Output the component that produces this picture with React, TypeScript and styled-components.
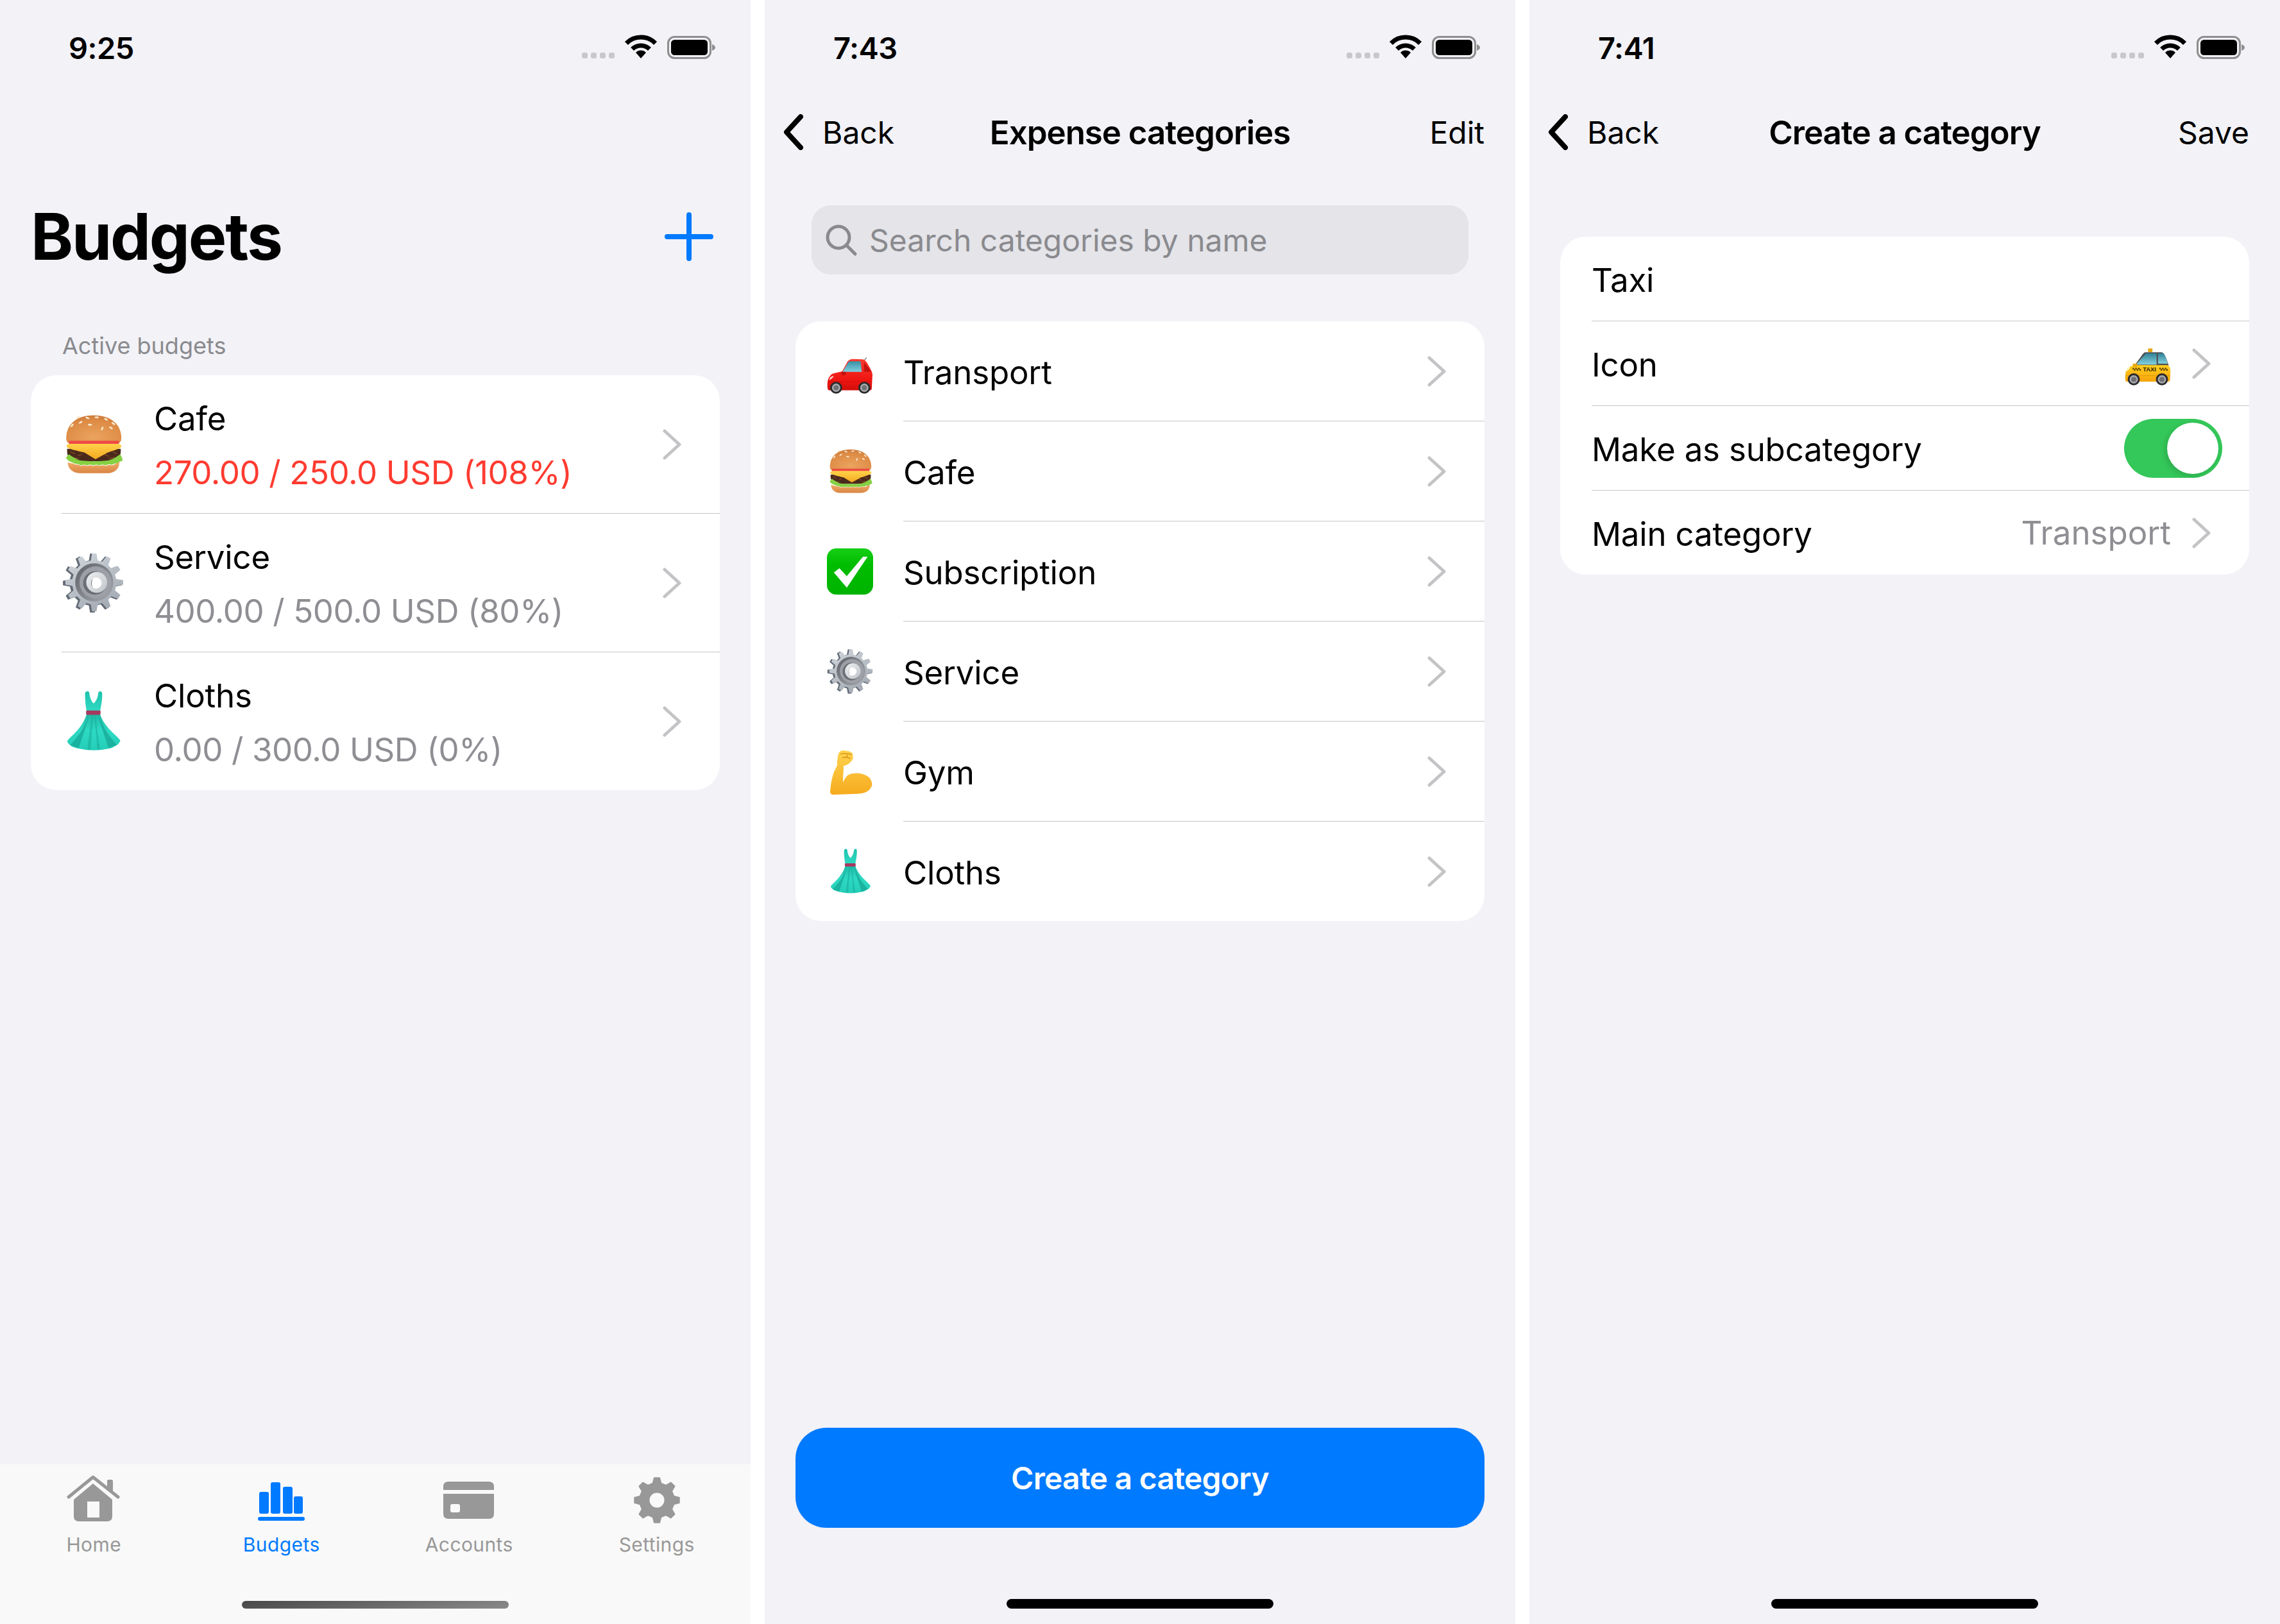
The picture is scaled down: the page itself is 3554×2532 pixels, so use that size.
import React from 'react'
import styled, { createGlobalStyle } from 'styled-components'

const GlobalStyle = createGlobalStyle`
  html, body {
    margin: 0;
    padding: 0;
    background: #ffffff;
  }
  body {
    font-family: Inter, "Noto Sans", "Liberation Sans", sans-serif;
    color: #000000;
  }
`

const Page = styled.div`
  display: flex;
  gap: 22px;
  width: 3554px;
  height: 2532px;
  overflow: hidden;
`

const Screen = styled.div`
  display: flex;
  flex-direction: column;
  flex: none;
  width: 1170px;
  height: 2532px;
  background: #f2f2f7;
`

const StatusRow = styled.div`
  display: flex;
  flex: none;
  align-items: flex-start;
  justify-content: space-between;
  box-sizing: border-box;
  height: 132px;
  padding: 54px 55px 0 107px;
`

const Clock = styled.div`
  font-size: 47px;
  font-weight: 600;
  line-height: 42px;
  letter-spacing: -0.5px;
`

const LargeHeader = styled.div`
  display: flex;
  align-items: center;
  justify-content: space-between;
  height: 120px;
  margin-top: 177px;
  padding: 0 58px 0 48px;
`

const LargeTitle = styled.h1`
  margin: 0;
  font-size: 100px;
  font-weight: 700;
  line-height: 120px;
  letter-spacing: -2.2px;
`

const SectionLabel = styled.div`
  margin: 86px 0 22px 97px;
  font-size: 36px;
  line-height: 48px;
  color: #8a8a8e;
`

const Card = styled.div<{ $top?: number }>`
  margin: ${({ $top }) => $top ?? 0}px 48px 0;
  border-radius: 40px;
  background: #ffffff;
  overflow: hidden;
`

const Separator = styled.div<{ $inset: number }>`
  height: 1px;
  margin-left: ${({ $inset }) => $inset}px;
  background: #c6c6c8;
`

const BudgetRow = styled.div`
  display: flex;
  align-items: center;
  gap: 47px;
  height: 215px;
  padding: 0 42px 0 49px;
`

const BudgetText = styled.div`
  display: flex;
  flex: 1;
  flex-direction: column;
  gap: 20px;
`

const RowLabel = styled.div`
  padding-top: 4px;
  font-size: 51px;
  line-height: 60px;
  letter-spacing: -0.2px;
`

const Amount = styled.div<{ $over?: boolean }>`
  padding-top: 4px;
  font-size: 51px;
  line-height: 60px;
  letter-spacing: -0.4px;
  color: ${({ $over }) => ($over ? '#ff3b30' : '#8e8e93')};
`

const CategoryRow = styled.div`
  display: flex;
  align-items: center;
  gap: 47px;
  height: 155px;
  padding: 0 42px 0 49px;
`

const FormRow = styled.div`
  display: flex;
  align-items: center;
  justify-content: space-between;
  height: 131px;
  padding: 0 42px 0 49px;
`

const Grow = styled(RowLabel)`
  flex: 1;
`

const Value = styled.div`
  display: flex;
  align-items: center;
  gap: 32px;
  font-size: 51px;
  color: #8e8e93;
`

const ChevronIcon = styled.svg`
  flex: none;
  width: 30px;
  height: 48px;
  margin-right: 18px;
  fill: none;
  stroke: #c4c4c7;
  stroke-width: 5;
  stroke-linecap: round;
  stroke-linejoin: round;
`

const EmojiIcon = styled.svg<{ $size: number }>`
  flex: none;
  width: ${({ $size }) => $size}px;
  height: ${({ $size }) => $size}px;
  overflow: visible;
`

const NavBar = styled.div`
  display: grid;
  flex: none;
  grid-template-columns: 1fr auto 1fr;
  align-items: center;
  height: 148px;
  padding: 0 48px;
`

const BackLink = styled.div`
  display: flex;
  align-items: center;
  gap: 29px;
  margin-left: -19px;
  font-size: 48px;
`

const BackChevron = styled.svg`
  width: 32px;
  height: 56px;
  fill: none;
  stroke: #000000;
  stroke-width: 8;
  stroke-linecap: round;
  stroke-linejoin: round;
`

const NavTitle = styled.div`
  font-size: 51px;
  font-weight: 600;
  letter-spacing: -1px;
`

const NavAction = styled.div`
  font-size: 48px;
  text-align: right;
`

const SearchField = styled.div`
  display: flex;
  align-items: center;
  gap: 18px;
  height: 108px;
  margin: 40px 73px 73px;
  padding: 0 20px;
  border-radius: 30px;
  background: #e4e4e9;
  font-size: 48px;
  color: #8a8a8e;
`

const SearchGlyph = styled.svg`
  flex: none;
  width: 52px;
  height: 52px;
  fill: none;
  stroke: #8a8a8e;
  stroke-width: 5;
  stroke-linecap: round;
`

const Footer = styled.div`
  display: flex;
  flex-direction: column;
  margin-top: auto;
`

const PrimaryButton = styled.div`
  display: flex;
  align-items: center;
  justify-content: center;
  height: 156px;
  margin: 0 48px 111px;
  border-radius: 48px;
  background: #007aff;
  color: #ffffff;
  font-size: 48px;
  font-weight: 600;
  letter-spacing: -0.75px;
`

const HomeBar = styled.div<{ $soft?: boolean }>`
  align-self: center;
  width: 416px;
  height: 15px;
  margin-bottom: 24px;
  border-radius: 8px;
  background: ${({ $soft }) => ($soft ? 'linear-gradient(170deg, #484848, #8a8a8a)' : '#000000')};
`

const TabBar = styled.div`
  display: flex;
  flex-direction: column;
  margin-top: auto;
  height: 249px;
  box-sizing: border-box;
  padding-top: 17px;
  background: #f9f9f9;
`

const Tabs = styled.div`
  display: grid;
  grid-template-columns: repeat(4, 1fr);
  margin-bottom: 68px;
`

const Tab = styled.div<{ $active?: boolean }>`
  display: flex;
  flex-direction: column;
  align-items: center;
  gap: 12px;
  font-size: 30px;
  line-height: 40px;
  letter-spacing: 0.4px;
  color: ${({ $active }) => ($active ? '#007aff' : '#989898')};
`

const TabGlyph = styled.svg`
  width: 84px;
  height: 76px;
  fill: currentColor;
`

const Toggle = styled.div`
  display: flex;
  justify-content: flex-end;
  box-sizing: border-box;
  width: 153px;
  height: 92px;
  padding: 6px;
  border-radius: 46px;
  background: #34c759;
`

const ToggleKnob = styled.div`
  width: 80px;
  height: 80px;
  border-radius: 50%;
  background: #ffffff;
  box-shadow: -3px 3px 8px rgba(0, 0, 0, 0.14);
`

function gearPath(cx: number, cy: number, outer: number, inner: number, teeth: number) {
  const step = (Math.PI * 2) / teeth
  const pts: string[] = []
  for (let i = 0; i < teeth; i++) {
    const a = i * step - Math.PI / 2
    const at = (r: number, d: number) =>
      `${(cx + r * Math.cos(a + d)).toFixed(2)} ${(cy + r * Math.sin(a + d)).toFixed(2)}`
    pts.push(at(inner, -step * 0.3), at(outer, -step * 0.15), at(outer, step * 0.15), at(inner, step * 0.3))
  }
  return `M${pts.join('L')}Z`
}

const Chevron = () => (
  <ChevronIcon viewBox="0 0 30 48">
    <path d="M4 3 L27 24 L4 45" />
  </ChevronIcon>
)

const Back = () => (
  <BackLink>
    <BackChevron viewBox="0 0 32 56">
      <path d="M27 4 L5 28 L27 52" />
    </BackChevron>
    Back
  </BackLink>
)

const StatusIcons = () => (
  <svg width="208" height="40" viewBox="0 0 208 40">
    {[0, 14, 28, 42].map((x) => (
      <rect key={x} x={x} y="28" width="9" height="9" rx="3" fill="#c7c7cc" />
    ))}
    <g transform="translate(68 1)" fill="none" stroke="#000000" strokeWidth="7">
      <path d="M1.4 12.4 A32 32 0 0 1 46.6 12.4" />
      <path d="M10.6 21.6 A19 19 0 0 1 37.4 21.6" />
      <path d="M24 36 L16 27 A11 11 0 0 1 32 27 Z" fill="#000000" stroke="none" />
    </g>
    <rect x="134.5" y="3.5" width="66" height="33" rx="10" fill="none" stroke="#8e8e8e" strokeWidth="3" />
    <rect x="139" y="8" width="57" height="24" rx="5.5" fill="#000000" />
    <path d="M203 15 C206 16 208 18 208 20 C208 22 206 24 203 25 Z" fill="#8e8e8e" />
  </svg>
)

const StatusBar = ({ time }: { time: string }) => (
  <StatusRow>
    <Clock>{time}</Clock>
    <StatusIcons />
  </StatusRow>
)

const Burger = () => (
  <>
    <defs>
      <radialGradient id="bunTop" cx="0.5" cy="0.75" r="0.8">
        <stop offset="0" stopColor="#eba45e" />
        <stop offset="0.7" stopColor="#dd8b45" />
        <stop offset="1" stopColor="#c9773a" />
      </radialGradient>
      <linearGradient id="bunBottom" x1="0" y1="0" x2="0" y2="1">
        <stop offset="0" stopColor="#f1ad6a" />
        <stop offset="1" stopColor="#d98543" />
      </linearGradient>
      <linearGradient id="cheese" x1="0" y1="0" x2="0" y2="1">
        <stop offset="0" stopColor="#ffd24a" />
        <stop offset="1" stopColor="#f3a81f" />
      </linearGradient>
    </defs>
    <path d="M6.5 40 C6.5 14 27 2.5 51 2.5 C75 2.5 96 14 96 40 C96 46 92 49 86 49 L16 49 C10 49 6.5 46 6.5 40Z" fill="url(#bunTop)" />
    {[[16, 19, -50], [30, 14, -30], [41, 7, 20], [56, 6, 0], [71, 9, 30], [83, 16, 40], [45, 18, 10], [65, 24, -70], [79, 23, 30], [26, 6, -20]].map(([x, y, r]) => (
      <ellipse key={`${x}-${y}`} cx={x} cy={y} rx="3.4" ry="1.5" fill="#f8e6c8" transform={`rotate(${r} ${x} ${y})`} />
    ))}
    <path d="M11 44 H92 C93 50 90 55 84 55 H20 C13 55 10 50 11 44Z" fill="#ee4a44" />
    <path d="M8 57 H95 C96 70 90 77 80 77 H24 C12 77 7 70 8 57Z" fill="#4b2a1b" />
    <path d="M14 62 L20 65 M26 68 L32 66 M68 66 L75 69 M82 62 L88 65 M20 72 L27 73 M76 73 L84 71" stroke="#7c4a2b" strokeWidth="1.6" strokeLinecap="round" />
    <path d="M7 53 C7 51 9 49 12 49 L91 49 C94 49 97 52 96 54 C95 56 84 60 74 63 L54 74 L36 63 C24 60 8 57 7 53Z" fill="url(#cheese)" />
    <path d="M6 72 C7 70 10 67 11 66 C16 70 22 73 26 75 C34 78 70 78 78 75 C84 73 90 69 94 66 C96 69 98 72 98 76 C94 78 92 78 90 81 C86 80 83 82 80 83 C76 81 73 83 70 84 C67 82 63 83 60 84 C56 82 53 83 50 84 C47 82 43 83 40 84 C36 82 33 83 30 84 C26 81 23 82 20 81 C17 79 11 79 6 72Z" fill="#86d044" />
    <path d="M9 79 C13 81 17 80 20 82 C23 83 27 82 30 85 C33 84 37 83 40 85 C44 84 47 83 50 85 C53 84 57 83 60 85 C63 84 67 83 70 85 C73 84 77 82 80 84 C84 83 88 81 93 78 C93 90 84 96.5 74 96.5 H28 C18 96.5 9 90 9 79Z" fill="url(#bunBottom)" />
  </>
)

const Cog = () => (
  <>
    <defs>
      <linearGradient id="cogFace" x1="0.2" y1="0" x2="0.8" y2="1">
        <stop offset="0" stopColor="#cdd3d9" />
        <stop offset="1" stopColor="#a2a8b0" />
      </linearGradient>
      <linearGradient id="cogRing" x1="0" y1="0" x2="1" y2="1">
        <stop offset="0" stopColor="#5e6168" />
        <stop offset="1" stopColor="#a5a8ae" />
      </linearGradient>
      <linearGradient id="cogBoss" x1="0" y1="0" x2="1" y2="1">
        <stop offset="0" stopColor="#eef0f2" />
        <stop offset="1" stopColor="#bfc3c8" />
      </linearGradient>
    </defs>
    <path d={gearPath(49, 50, 48, 37, 12)} fill="#626a75" />
    <path d={gearPath(52, 49, 47, 36, 12)} fill="url(#cogFace)" />
    <circle cx="52" cy="49" r="31" fill="url(#cogRing)" />
    <circle cx="54" cy="49" r="26" fill="#9da0a6" />
    <circle cx="53" cy="50" r="19" fill="#6b6e75" />
    <circle cx="56" cy="49" r="17" fill="url(#cogBoss)" />
    <circle cx="55" cy="50" r="9" fill="#ffffff" />
    <path d="M50 43 A9 9 0 0 0 50 57 A12 12 0 0 1 50 43Z" fill="#6b6e75" />
  </>
)

const Dress = () => (
  <>
    <defs>
      <linearGradient id="dressTop" x1="0" y1="0" x2="0" y2="1">
        <stop offset="0" stopColor="#1fc3ae" />
        <stop offset="1" stopColor="#2fd9c2" />
      </linearGradient>
      <linearGradient id="dressSkirt" x1="0" y1="0" x2="0" y2="1">
        <stop offset="0" stopColor="#1fb8a5" />
        <stop offset="0.45" stopColor="#2edac3" />
        <stop offset="1" stopColor="#24cdb7" />
      </linearGradient>
    </defs>
    <path d="M37 6 C37 2 39 0.7 41 0.7 C44 0.7 44 3 44.5 7 C45.5 13 48 18 51 20.5 C54 18 57 13 58 7 C58.5 3 59 0.7 62 0.7 C64 0.7 65 3 65 6 C65 16 63 25 61.5 33 H39.6 C38 25 37 16 37 6Z" fill="url(#dressTop)" />
    <path d="M39.6 38 H61.5 C65 50 74 60 82 68 C87 73 92 77 94.4 81 C92 86 90 88 85 90 C80 94 74 94 68 95 C60 97 42 97 34 95 C27 94 20 93 15 90 C12 88 9 85 8 82 C11 77 17 73 22 67 C29 60 36 50 39.6 38Z" fill="url(#dressSkirt)" />
    <path d="M13 88 C24 76 36 62 43 40 C38 64 30 80 27 93Z M89 88 C78 76 68 62 59 40 C64 64 72 80 75 93Z" fill="#16a896" opacity="0.75" />
    <path d="M48 40 C46 60 42 80 41 96 L46 96 C47 78 49 60 50 40Z M54 40 C56 60 60 80 61 96 L57 96 C56 78 54 60 52 40Z" fill="#17ab99" opacity="0.55" />
    <rect x="38.8" y="32" width="23.4" height="7" rx="1.5" fill="#a6395f" />
  </>
)

const Car = () => (
  <>
    <defs>
      <linearGradient id="carBody" x1="0" y1="0" x2="0" y2="1">
        <stop offset="0" stopColor="#fb3b30" />
        <stop offset="0.7" stopColor="#ee1410" />
        <stop offset="1" stopColor="#cf0f0c" />
      </linearGradient>
      <linearGradient id="carGlass" x1="0" y1="0" x2="0" y2="1">
        <stop offset="0" stopColor="#3b8fa3" />
        <stop offset="1" stopColor="#7fd0de" />
      </linearGradient>
    </defs>
    <path d="M80 27 L85.6 20.6" stroke="#666666" strokeWidth="1.6" strokeLinecap="round" />
    <path d="M1 80 C1 70 3 65 6 61 C8 57 11 55 15 54 L33 50 L45 28 C48 25 52 23.4 57 23.4 L78 24 C84 26 87 31 90 37 C94 44 98 50 98.6 57 L97 87 C97 90 95 91 92 91 H5 C2 91 1 88 1 80Z" fill="url(#carBody)" />
    <path d="M33.8 51 L47.7 28 H73 L75.5 51Z" fill="url(#carGlass)" />
    <path d="M80 31 C86 36 91 44 95 51 L81 51Z" fill="#c21410" />
    <path d="M31 51 H41 V57 L35 59 L31 56Z" fill="#c4120e" />
    <path d="M6 65 C8 62 11 60 15 60 C13 64 9 67 5 69Z" fill="#ffd9d6" />
    <path d="M3 72 H96" stroke="#c40f0c" strokeWidth="1" />
    {[19.9, 81].map((cx) => (
      <g key={cx}>
        <circle cx={cx} cy="85.4" r="13" fill="#2a2a2c" />
        <circle cx={cx} cy="85.4" r="9" fill="#a9abaf" />
        <circle cx={cx} cy="85.4" r="5.5" fill="#6f7074" />
      </g>
    ))}
  </>
)

const Check = () => (
  <>
    <defs>
      <linearGradient id="checkBox" x1="0" y1="0" x2="0" y2="1">
        <stop offset="0" stopColor="#16cf16" />
        <stop offset="0.35" stopColor="#00bd00" />
        <stop offset="1" stopColor="#00b300" />
      </linearGradient>
    </defs>
    <rect x="0" y="0" width="100" height="100" rx="20" fill="url(#checkBox)" />
    <path d="M15 52 L27 43 L43 60 L78 18 L88 18 L43 85Z" fill="#ffffff" />
  </>
)

const Muscle = () => (
  <>
    <defs>
      <linearGradient id="armSkin" x1="0" y1="0" x2="0" y2="1">
        <stop offset="0" stopColor="#ffd34e" />
        <stop offset="1" stopColor="#f6ab1f" />
      </linearGradient>
    </defs>
    <path d="M24.5 12 C27 7 30 4 34 4 C42 4 50 6 54.6 9.5 C57 14 57 20 56 23.4 C53 28 50 31 47.7 32.6 C44 35 40 37 36 37.5 C36 40 36 43 36 46.5 C35 56 34.5 66 35 74 C37 68 40 62 45 58 C51 54 59 53 66 53.5 C76 54 85 57 91.7 62.7 C96 68 98 74 97.7 79 C96 85 92 90 87 93 C80 97 70 98 61.6 98.4 L14 100 C10 100 7 98 6.9 93 C8 80 10 68 12.9 58 C15 50 19 43 22 37 C22 28 23 20 24.5 12Z" fill="url(#armSkin)" />
    <path d="M30 12 C36 10 44 10 53 13 M34 20 C40 18 46 19 50 22 M44 14 L42 19" fill="none" stroke="#d58a10" strokeWidth="1.8" strokeLinecap="round" />
  </>
)

const Taxi = () => (
  <>
    <defs>
      <linearGradient id="taxiBody" x1="0" y1="0" x2="0" y2="1">
        <stop offset="0" stopColor="#ffcf1f" />
        <stop offset="1" stopColor="#f5a30a" />
      </linearGradient>
      <linearGradient id="taxiGlass" x1="0" y1="0" x2="0" y2="1">
        <stop offset="0" stopColor="#2e7f96" />
        <stop offset="1" stopColor="#84d2e0" />
      </linearGradient>
    </defs>
    <rect x="50.5" y="17" width="9.5" height="8" rx="1.5" fill="#e9a713" />
    <path d="M21 54 L40 28 C42 26 44 25.5 47 25.5 L80 25.5 C86 27 90 38 95 54Z" fill="#4c4c50" />
    <path d="M24 52 L46 27.5 H69 V52Z" fill="url(#taxiGlass)" />
    <path d="M72 27.5 H84 C88 33 91 42 93 50 H72Z" fill="url(#taxiGlass)" />
    <path d="M1 83 C1 72 2 66 5 61 C9 57 14 55 20 53 H93 C97 55 99 60 99 66 L98 85 C98 88 96 89 93 89 H5 C2 89 1 87 1 83Z" fill="url(#taxiBody)" />
    <path d="M17 50 H27 V57 H19Z" fill="#eaa80e" />
    <path d="M4 62 C6 59 9 58 12 57 C11 61 8 65 3 67Z" fill="#fff4c2" />
    <g fill="#3a2a00">
      {[17, 23, 29, 75, 81, 87].map((x) => (
        <g key={x}>
          <rect x={x} y="59" width="3" height="3" />
          <rect x={x + 3} y="62" width="3" height="3" />
        </g>
      ))}
    </g>
    <text x="53.5" y="66" fontFamily="Liberation Sans, sans-serif" fontSize="13" fontWeight="700" textAnchor="middle" fill="#2a2000">
      TAXI
    </text>
    <path d="M2 76 H98" stroke="#d98d06" strokeWidth="1" />
    {[19.5, 80.5].map((cx) => (
      <g key={cx}>
        <circle cx={cx} cy="84" r="13" fill="#2a2a2c" />
        <circle cx={cx} cy="84" r="9" fill="#a9abaf" />
        <circle cx={cx} cy="84" r="5.5" fill="#6f7074" />
      </g>
    ))}
  </>
)

const emojis = {
  burger: Burger,
  cog: Cog,
  dress: Dress,
  car: Car,
  check: Check,
  muscle: Muscle,
  taxi: Taxi,
}

type EmojiName = keyof typeof emojis

const Emoji = ({ name, size }: { name: EmojiName; size: number }) => {
  const Drawing = emojis[name]
  return (
    <EmojiIcon $size={size} viewBox="0 0 100 100">
      <Drawing />
    </EmojiIcon>
  )
}

const budgets: { icon: EmojiName; name: string; amount: string; over?: boolean }[] = [
  { icon: 'burger', name: 'Cafe', amount: '270.00 / 250.0 USD (108%)', over: true },
  { icon: 'cog', name: 'Service', amount: '400.00 / 500.0 USD (80%)' },
  { icon: 'dress', name: 'Cloths', amount: '0.00 / 300.0 USD (0%)' },
]

const categories: { icon: EmojiName; name: string }[] = [
  { icon: 'car', name: 'Transport' },
  { icon: 'burger', name: 'Cafe' },
  { icon: 'check', name: 'Subscription' },
  { icon: 'cog', name: 'Service' },
  { icon: 'muscle', name: 'Gym' },
  { icon: 'dress', name: 'Cloths' },
]

const BudgetsScreen = () => (
  <Screen>
    <StatusBar time="9:25" />
    <LargeHeader>
      <LargeTitle>Budgets</LargeTitle>
      <svg width="76" height="76" viewBox="0 0 76 76" stroke="#007aff" strokeWidth="8" strokeLinecap="round">
        <path d="M38 4 V72 M4 38 H72" />
      </svg>
    </LargeHeader>
    <SectionLabel>Active budgets</SectionLabel>
    <Card>
      {budgets.map((b, i) => (
        <React.Fragment key={b.name}>
          {i > 0 && <Separator $inset={48} />}
          <BudgetRow>
            <Emoji name={b.icon} size={96} />
            <BudgetText>
              <RowLabel>{b.name}</RowLabel>
              <Amount $over={b.over}>{b.amount}</Amount>
            </BudgetText>
            <Chevron />
          </BudgetRow>
        </React.Fragment>
      ))}
    </Card>
    <TabBar>
      <Tabs>
        <Tab>
          <TabGlyph viewBox="0 0 84 76">
            <path d="M3 34 L41 3 L80 34" fill="none" stroke="currentColor" strokeWidth="5" strokeLinecap="round" strokeLinejoin="round" />
            <rect x="63" y="7" width="9" height="18" rx="2" />
            <path fillRule="evenodd" d="M41 13 L11 38 V64 Q11 72 19 72 H63 Q71 72 71 64 V38Z M32 41 H51 V66 H32Z" />
          </TabGlyph>
          Home
        </Tab>
        <Tab $active>
          <TabGlyph viewBox="0 0 84 76">
            <rect x="7" y="26" width="15" height="34" rx="3" />
            <rect x="25" y="11" width="15" height="49" rx="3" />
            <rect x="44" y="18" width="15" height="42" rx="3" />
            <rect x="61" y="33" width="14" height="27" rx="3" />
            <rect x="5" y="65" width="73" height="6" rx="3" />
          </TabGlyph>
          Budgets
        </Tab>
        <Tab>
          <TabGlyph viewBox="0 0 84 76">
            <path d="M2 23 V18 Q2 10 10 10 H73 Q81 10 81 18 V23Z" />
            <path fillRule="evenodd" d="M2 29 H81 V60 Q81 68 73 68 H10 Q2 68 2 60Z M16 45 Q13 45 13 48 V55 Q13 58 16 58 H25 Q28 58 28 55 V48 Q28 45 25 45Z" />
          </TabGlyph>
          Accounts
        </Tab>
        <Tab>
          <TabGlyph viewBox="0 0 84 76">
            <path fillRule="evenodd" d={`${gearPath(42, 39, 35, 27, 8)} M54.5 39 A12.5 12.5 0 1 0 29.5 39 A12.5 12.5 0 1 0 54.5 39Z`} stroke="currentColor" strokeWidth="2" strokeLinejoin="round" />
          </TabGlyph>
          Settings
        </Tab>
      </Tabs>
      <HomeBar $soft />
    </TabBar>
  </Screen>
)

const CategoriesScreen = () => (
  <Screen>
    <StatusBar time="7:43" />
    <NavBar>
      <Back />
      <NavTitle>Expense categories</NavTitle>
      <NavAction>Edit</NavAction>
    </NavBar>
    <SearchField>
      <SearchGlyph viewBox="0 0 52 52">
        <circle cx="22" cy="22" r="17" />
        <path d="M35 35 L48 48" />
      </SearchGlyph>
      Search categories by name
    </SearchField>
    <Card>
      {categories.map((c, i) => (
        <React.Fragment key={c.name}>
          {i > 0 && <Separator $inset={168} />}
          <CategoryRow>
            <Emoji name={c.icon} size={72} />
            <Grow>{c.name}</Grow>
            <Chevron />
          </CategoryRow>
        </React.Fragment>
      ))}
    </Card>
    <Footer>
      <PrimaryButton>Create a category</PrimaryButton>
      <HomeBar />
    </Footer>
  </Screen>
)

const CreateScreen = () => (
  <Screen>
    <StatusBar time="7:41" />
    <NavBar>
      <Back />
      <NavTitle>Create a category</NavTitle>
      <NavAction>Save</NavAction>
    </NavBar>
    <Card $top={89}>
      <FormRow>
        <RowLabel>Taxi</RowLabel>
      </FormRow>
      <Separator $inset={49} />
      <FormRow>
        <RowLabel>Icon</RowLabel>
        <Value>
          <Emoji name="taxi" size={72} />
          <Chevron />
        </Value>
      </FormRow>
      <Separator $inset={49} />
      <FormRow>
        <RowLabel>Make as subcategory</RowLabel>
        <Toggle>
          <ToggleKnob />
        </Toggle>
      </FormRow>
      <Separator $inset={49} />
      <FormRow>
        <RowLabel>Main category</RowLabel>
        <Value>
          Transport
          <Chevron />
        </Value>
      </FormRow>
    </Card>
    <Footer>
      <HomeBar />
    </Footer>
  </Screen>
)

export default function App() {
  return (
    <>
      <GlobalStyle />
      <Page>
        <BudgetsScreen />
        <CategoriesScreen />
        <CreateScreen />
      </Page>
    </>
  )
}
